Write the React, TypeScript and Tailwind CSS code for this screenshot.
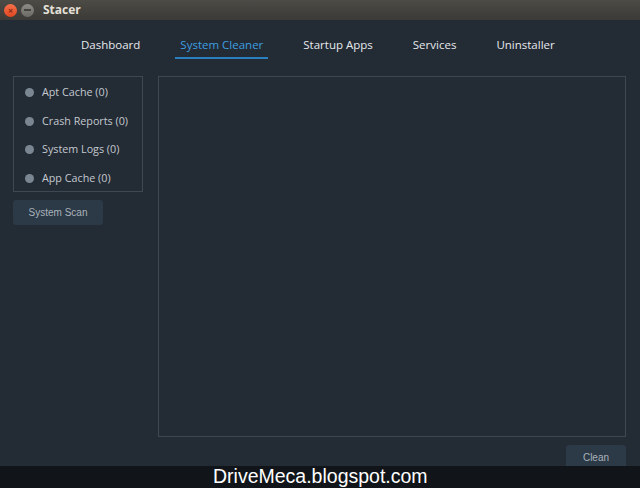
const tabs = [
  { label: "Dashboard", active: false },
  { label: "System Cleaner", active: true },
  { label: "Startup Apps", active: false },
  { label: "Services", active: false },
  { label: "Uninstaller", active: false },
];

const cleanItems = ["Apt Cache (0)", "Crash Reports (0)", "System Logs (0)", "App Cache (0)"];

export default function App() {
  return (
    <div className="relative w-[640px] h-[488px] overflow-hidden bg-[#232b35] flex flex-col font-['Open_Sans',sans-serif]">
      {/* title bar */}
      <div className="h-[20px] flex items-center bg-gradient-to-b from-[#4d4b46] to-[#3b3a36] shrink-0">
        <div className="ml-[4px] w-[13px] h-[13px] rounded-full bg-gradient-to-b from-[#f5714b] to-[#e0461f] flex items-center justify-center">
          <span className="text-[9px] leading-none text-[#8a2a12] font-bold">×</span>
        </div>
        <div className="ml-[4px] w-[13px] h-[13px] rounded-full bg-gradient-to-b from-[#8e8c86] to-[#6c6a65] flex items-center justify-center">
          <span className="block w-[7px] h-[2px] bg-[#46443f]" />
        </div>
        <span className="ml-[9px] text-[12px] font-bold text-[#e4e0d8]">Stacer</span>
      </div>

      {/* tabs */}
      <nav className="flex pl-[76px] gap-[30px] pt-[14px] h-[56px] shrink-0">
        {tabs.map(({ label, active }) => (
          <div
            key={label}
            className={`px-[5px] h-[25px] text-[11.5px] leading-[22px] border-b-2 ${
              active ? "text-[#3d9fe0] border-[#2b7fbf]" : "text-[#e6e9ec] border-transparent"
            }`}
          >
            {label}
          </div>
        ))}
      </nav>

      {/* content */}
      <div className="flex pl-[13px] pr-[14px] gap-[15px]">
        <div className="w-[130px] shrink-0 flex flex-col gap-[8px]">
          <div className="border border-[#3d4852] h-[116px] flex flex-col pt-[6px] gap-[9.5px] pl-[11px]">
            {cleanItems.map((item) => (
              <div key={item} className="flex items-center h-[19px]">
                <span className="w-[9px] h-[9px] rounded-full bg-[#7a8792]" />
                <span className="ml-[8px] text-[10.75px] text-[#c3c9cf]">{item}</span>
              </div>
            ))}
          </div>
          <button className="w-[90px] h-[25px] rounded-[3px] bg-[#2c3946] text-[10px] text-[#aab3bc] font-['Liberation_Sans',sans-serif]">
            System Scan
          </button>
        </div>

        <div className="flex-1 flex flex-col">
          <div className="h-[361px] border border-[#3d4852]" />
          <div className="flex justify-end mt-[8px]">
            <button className="w-[60px] h-[24px] rounded-[3px] bg-[#2c3946] text-[10px] text-[#aab3bc] font-['Liberation_Sans',sans-serif]">
              Clean
            </button>
          </div>
        </div>
      </div>

      {/* watermark */}
      <div className="absolute left-0 right-0 bottom-0 h-[22px] bg-[#111519] flex items-center">
        <span className="ml-[213px] text-[19.5px] leading-none text-white font-['Liberation_Sans',sans-serif]">
          DriveMeca.blogspot.com
        </span>
      </div>
    </div>
  );
}
